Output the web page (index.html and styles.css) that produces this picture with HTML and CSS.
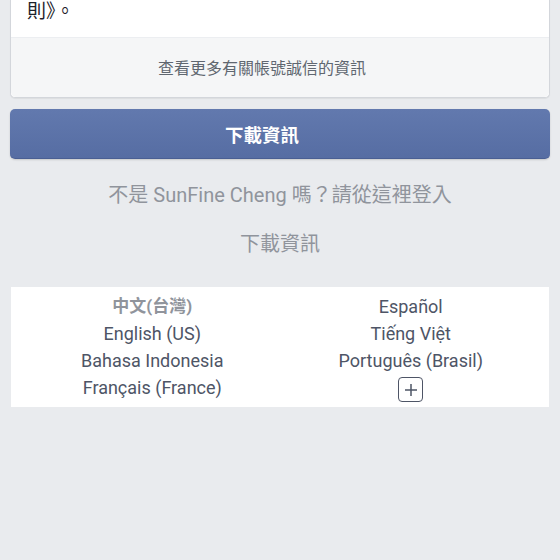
FILE: index.html
```html
<!DOCTYPE html>
<html lang="zh-Hant">
<head>
  <meta charset="UTF-8" />
  <meta name="viewport" content="width=device-width, initial-scale=1.0" />
  <title>下載資訊</title>
  <link rel="stylesheet" href="styles.css">
</head>
<body>
  <div class="page">
    <div class="card">
      <div class="card-body">則》。</div>
      <div class="card-footer">查看更多有關帳號誠信的資訊</div>
    </div>

    <button class="primary-btn">下載資訊</button>

    <div class="link-line">不是 SunFine Cheng 嗎？請從這裡登入</div>
    <div class="link-line">下載資訊</div>
  </div>

  <div class="lang-box">
    <div class="lang-col">
      <span class="lang current">中文(台灣)</span>
      <span class="lang">English (US)</span>
      <span class="lang">Bahasa Indonesia</span>
      <span class="lang">Français (France)</span>
    </div>
    <div class="lang-col">
      <span class="lang">Español</span>
      <span class="lang">Tiếng Việt</span>
      <span class="lang">Português (Brasil)</span>
      <span class="lang">
        <span class="more-btn">
          <svg width="14" height="14" viewBox="0 0 14 14">
            <path d="M7 1v12M1 7h12" stroke="#4e5566" stroke-width="1.5" fill="none" />
          </svg>
        </span>
      </span>
    </div>
  </div>
</body>
</html>
```

FILE: styles.css
```css
html, body {
  margin: 0;
  padding: 0;
  background: #e9ebee;
  font-family: Roboto, "Noto Sans CJK TC", sans-serif;
}
.page {
  padding: 0 10px;
}
.card {
  background: #fff;
  border: 1px solid #d3d6db;
  border-top: none;
  border-radius: 0 0 5px 5px;
  box-shadow: 0 1px 1px rgba(0,0,0,0.06);
}
.card-body {
  padding: 0 16px 13px;
  font-size: 19px;
  line-height: 24px;
  color: #1d2129;
}
.card-footer {
  background: #f5f6f7;
  border-top: 1px solid #eceef1;
  border-radius: 0 0 5px 5px;
  height: 59px;
  line-height: 61px;
  padding-right: 36px;
  text-align: center;
  font-size: 16px;
  color: #606770;
}
.primary-btn {
  display: block;
  width: 100%;
  height: 50px;
  margin-top: 11px;
  padding: 0 36px 0 0;
  border: none;
  border-bottom: 1px solid #4a5f93;
  border-radius: 5px;
  background: linear-gradient(#6279ae, #566da3);
  color: #fff;
  font-family: Roboto, "Noto Sans CJK TC", sans-serif;
  font-size: 18.5px;
  font-weight: bold;
  box-shadow: 0 1px 2px rgba(0,0,0,0.15);
}
.link-line {
  margin-top: 23px;
  text-align: center;
  font-size: 20px;
  line-height: 26px;
  color: #90949c;
}
.lang-box {
  display: grid;
  grid-template-columns: 1fr 1fr;
  margin: 30px 11px 0;
  padding: 6px 9px 6px 12px;
  background: #fff;
}
.lang-col {
  display: flex;
  flex-direction: column;
  align-items: center;
}
.lang {
  height: 27px;
  line-height: 27px;
  font-size: 18px;
  color: #4e5566;
}
.lang.current {
  font-size: 17px;
  color: #90949c;
  font-weight: bold;
}
.more-btn {
  display: inline-flex;
  align-items: center;
  justify-content: center;
  width: 23px;
  height: 23px;
  margin-top: 1px;
  border: 1px solid #4e5566;
  border-radius: 4px;
  vertical-align: middle;
}
```
